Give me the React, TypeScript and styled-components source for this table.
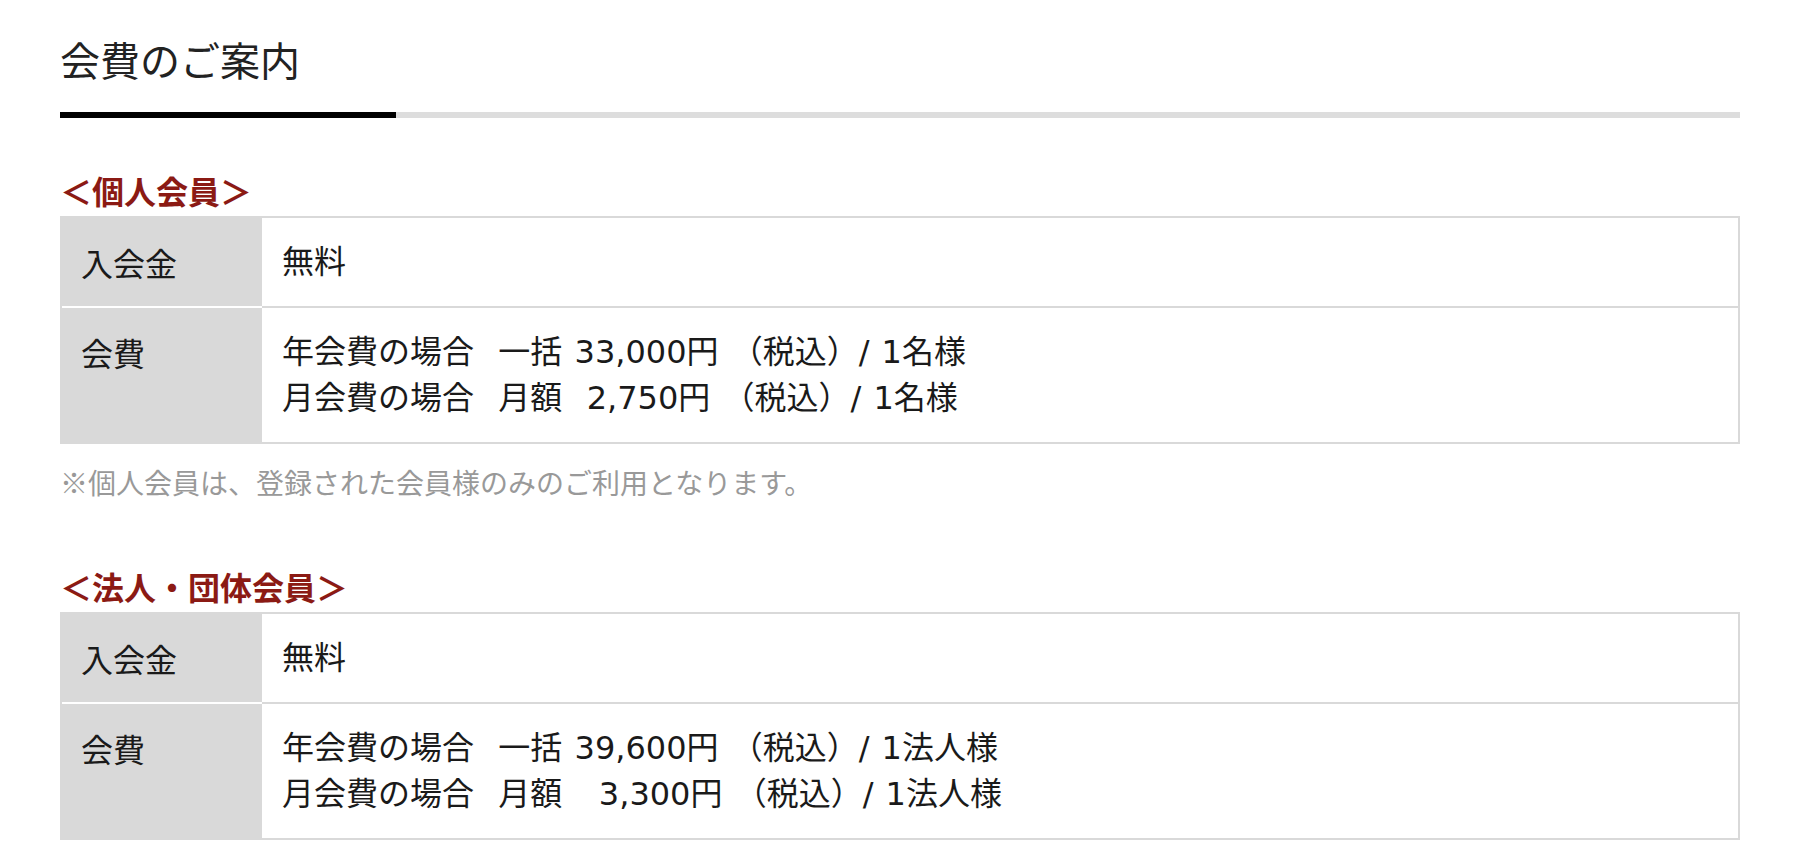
import React from "react";
import styled, { createGlobalStyle } from "styled-components";

const Global = createGlobalStyle`
  html, body { margin: 0; padding: 0; background: #fff; }
  body { font-family: "Noto Sans CJK JP", "Noto Sans", sans-serif; color: #1a1a1a; }
  * { box-sizing: border-box; }
`;

const Page = styled.div`
  width: 1808px;
  padding: 29px 68px 0 60px;
`;

const Title = styled.h2`
  margin: 0;
  font-size: 40px;
  line-height: 60px;
  font-weight: 400;
  color: #222;
`;

const TitleBar = styled.div`
  margin-top: 23px;
  height: 6px;
  background: #dddddd;
  display: flex;
`;

const TitleBarAccent = styled.div`
  width: 336px;
  background: #000;
`;

const SectionTitle = styled.h3<{ $top: number }>`
  margin: ${(p) => p.$top}px 0 3px;
  font-size: 32px;
  line-height: 46px;
  font-weight: 700;
  color: #8b1a14;
`;

const FeeTable = styled.div`
  border: 2px solid #d9d9d9;
  display: flex;
  flex-direction: column;
`;

const Row = styled.div`
  display: grid;
  grid-template-columns: 200px 1fr;
`;

const Label = styled.div<{ $first: boolean }>`
  background: #d9d9d9;
  padding: 21px 19px;
  font-size: 32px;
  line-height: 46px;
  border-top: ${(p) => (p.$first ? "none" : "2px solid #fff")};
`;

const Value = styled.div<{ $first: boolean }>`
  padding: 21px 20px;
  font-family: "DejaVu Sans", "Noto Sans CJK JP", sans-serif;
  font-size: 32px;
  line-height: 46px;
  word-spacing: 2px;
  border-top: ${(p) => (p.$first ? "none" : "2px solid #d9d9d9")};
`;

const Line = styled.div`
  white-space: pre;
`;

const Note = styled.p`
  margin: 18px 0 0;
  font-size: 28px;
  line-height: 40px;
  color: #999;
`;

type Fee = { label: string; lines: string[] };

const individual: Fee[] = [
  { label: "入会金", lines: ["無料"] },
  {
    label: "会費",
    lines: [
      "年会費の場合  一括 33,000円 （税込）/ 1名様",
      "月会費の場合  月額  2,750円 （税込）/ 1名様",
    ],
  },
];

const corporate: Fee[] = [
  { label: "入会金", lines: ["無料"] },
  {
    label: "会費",
    lines: [
      "年会費の場合  一括 39,600円 （税込）/ 1法人様",
      "月会費の場合  月額   3,300円 （税込）/ 1法人様",
    ],
  },
];

function Table({ rows }: { rows: Fee[] }) {
  return (
    <FeeTable>
      {rows.map((r, i) => (
        <Row key={r.label}>
          <Label $first={i === 0}>{r.label}</Label>
          <Value $first={i === 0}>
            {r.lines.map((l) => (
              <Line key={l}>{l}</Line>
            ))}
          </Value>
        </Row>
      ))}
    </FeeTable>
  );
}

export default function App() {
  return (
    <>
      <Global />
      <Page>
        <Title>会費のご案内</Title>
        <TitleBar>
          <TitleBarAccent />
        </TitleBar>
        <SectionTitle $top={49}>＜個人会員＞</SectionTitle>
        <Table rows={individual} />
        <Note>※個人会員は、登録された会員様のみのご利用となります。</Note>
        <SectionTitle $top={61}>＜法人・団体会員＞</SectionTitle>
        <Table rows={corporate} />
      </Page>
    </>
  );
}
